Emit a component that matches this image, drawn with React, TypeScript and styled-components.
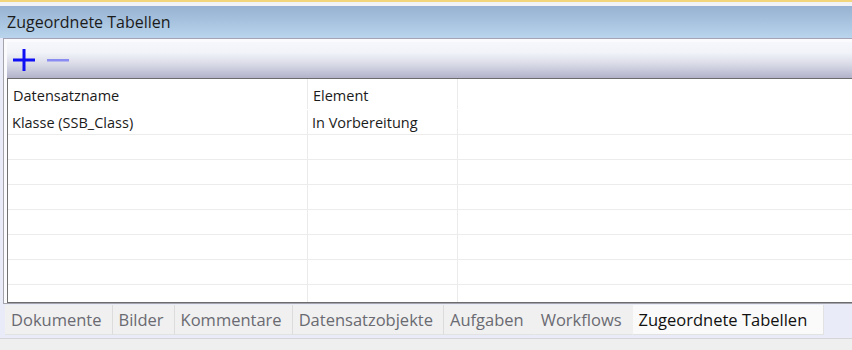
import React, { FC } from "react";
import styled, { createGlobalStyle } from "styled-components";

const GlobalStyle = createGlobalStyle`
  html, body {
    margin: 0;
    padding: 0;
    width: 852px;
    height: 350px;
    overflow: hidden;
    background: #efefef;
  }
  * {
    box-sizing: border-box;
  }
`;

const Window = styled.div`
  width: 852px;
  height: 350px;
  display: flex;
  flex-flow: column nowrap;
  font-family: "Open Sans", "Noto Sans", sans-serif;
  color: #1b1b1b;
  background: #e9ecf8;
`;

const TopStrip = styled.div`
  height: 6px;
  border-top: 2px solid #f3d57c;
  background: #f1f2f6;
`;

const TitleBar = styled.div`
  height: 32px;
  display: flex;
  align-items: center;
  padding-left: 7px;
  font-size: 16px;
  background: linear-gradient(to bottom, #97b2d2, #b9d4ec);
`;

const Frame = styled.div`
  height: 266px;
  margin-left: 3px;
  padding: 3px 0 0 3px;
  display: flex;
  flex-flow: column nowrap;
  border-top: 1px solid #a6a3b6;
  border-left: 1px solid #a4a4ac;
  border-bottom: 1px solid #a4a4ac;
  background: #fbfbfd;
`;

const Toolbar = styled.div`
  height: 37px;
  display: flex;
  align-items: center;
  gap: 10px;
  padding-left: 5px;
  border-bottom: 1px solid #6c6c6c;
  background: linear-gradient(to bottom, #f5f7fc 0%, #f1f3f9 30%, #d6d7e4 65%, #b2b3ca 100%);
`;

const ToolButton = styled.button`
  width: 24px;
  height: 24px;
  padding: 0;
  border: none;
  background: transparent;
  display: flex;
  align-items: center;
  justify-content: center;
`;

const Table = styled.div`
  flex: 1;
  display: flex;
  flex-flow: column nowrap;
  border-left: 1px solid #707070;
  border-bottom: 1px solid #6c6c6c;
  background: #ffffff;
  overflow: hidden;
`;

const Row = styled.div<{ $header?: boolean }>`
  height: ${(p) => (p.$header ? "31px" : "25px")};
  flex-shrink: 0;
  display: grid;
  grid-template-columns: 300px 150px 1fr;
  border-bottom: 1px solid ${(p) => (p.$header ? "transparent" : "#ececec")};
`;

const Cell = styled.div<{ $header?: boolean }>`
  display: flex;
  align-items: center;
  padding-left: ${(p) => (p.$header ? "5px" : "4px")};
  padding-top: ${(p) => (p.$header ? "2px" : "0")};
  font-size: 14.5px;
  border-right: 1px solid #ebebeb;
  white-space: nowrap;

  &:last-child {
    border-right: none;
  }
`;

const TabBar = styled.div`
  height: 30px;
  margin-top: 1px;
  display: flex;
  padding-left: 5px;
  background: #e9ecf8;
`;

const Tab = styled.div<{ $active?: boolean; $plain?: boolean }>`
  display: flex;
  align-items: center;
  padding: 0 ${(p) => (p.$active ? "16px" : "10px")} 0 6px;
  font-size: 16.5px;
  color: ${(p) => (p.$active ? "#111111" : "#6a6a72")};
  background: ${(p) => (p.$active ? "#fafafa" : "#f0f0f0")};
  border-right: 1px solid
    ${(p) => (p.$active ? "#e2e2e2" : p.$plain ? "#f0f0f0" : "#dcdcdc")};
  border-bottom: 1px solid #e2e2e2;
  white-space: nowrap;
`;

const StatusBar = styled.div`
  flex: 1;
  margin-top: 3px;
  border-top: 1px solid #d6d6d8;
  background: #efefef;
`;

const PlusIcon: FC = () => (
  <svg width="22" height="22" viewBox="0 0 22 22">
    <rect x="0" y="9.5" width="22" height="3" fill="#1010f5" />
    <rect x="9.5" y="0" width="3" height="22" fill="#1010f5" />
  </svg>
);

const MinusIcon: FC = () => (
  <svg width="22" height="22" viewBox="0 0 22 22">
    <rect x="0" y="10" width="22" height="2.5" fill="#8a8cf2" />
  </svg>
);

const tabs = [
  "Dokumente",
  "Bilder",
  "Kommentare",
  "Datensatzobjekte",
  "Aufgaben",
  "Workflows",
  "Zugeordnete Tabellen",
];

const activeTab = "Zugeordnete Tabellen";

const rows: [string, string][] = [
  ["Klasse (SSB_Class)", "In Vorbereitung"],
  ["", ""],
  ["", ""],
  ["", ""],
  ["", ""],
  ["", ""],
  ["", ""],
  ["", ""],
];

const App: FC = (): JSX.Element => {
  const activeIndex = tabs.indexOf(activeTab);

  return (
    <Window>
      <GlobalStyle />
      <TopStrip />
      <TitleBar>Zugeordnete Tabellen</TitleBar>
      <Frame>
        <Toolbar>
          <ToolButton aria-label="Hinzufügen">
            <PlusIcon />
          </ToolButton>
          <ToolButton aria-label="Entfernen">
            <MinusIcon />
          </ToolButton>
        </Toolbar>
        <Table>
          <Row $header>
            <Cell $header>Datensatzname</Cell>
            <Cell $header>Element</Cell>
            <Cell $header />
          </Row>
          {rows.map(([name, element], i) => (
            <Row key={i}>
              <Cell>{name}</Cell>
              <Cell>{element}</Cell>
              <Cell />
            </Row>
          ))}
        </Table>
      </Frame>
      <TabBar>
        {tabs.map((t, i) => (
          <Tab
            key={t}
            $active={i === activeIndex}
            $plain={i === activeIndex - 1 || i === activeIndex - 2}
          >
            {t}
          </Tab>
        ))}
      </TabBar>
      <StatusBar />
    </Window>
  );
};

export default App;
